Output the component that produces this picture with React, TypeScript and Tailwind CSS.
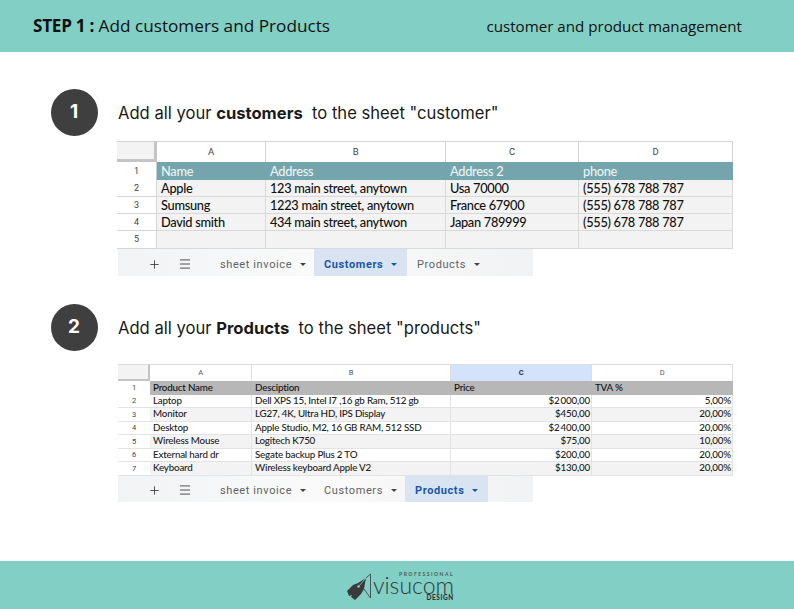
import type { ReactNode } from 'react';
import { Menu, Plus } from 'lucide-react';

const sans = 'font-["Open_Sans",sans-serif]';
const cellFont = 'font-["Lato",sans-serif] font-medium';

interface TabsProps {
    active: string;
    className?: string;
    tabs: { label: string; width: string }[];
}

const SheetTabs = ({ active, className, tabs }: TabsProps) => (
    <div className={`flex w-[415px] bg-gradient-to-r from-[#f1f3f5] via-[#fafafa] to-[#f1f2f3] pt-[3px] font-['Roboto',sans-serif] text-[11px] font-normal tracking-[0.6px] text-[#5f6368] ${className ?? ''}`}>
        <div className="flex w-[96px] items-center gap-[17px] pl-[30px] text-[#444]">
            <Plus className="h-[13px] w-[13px]" strokeWidth={1.7} />
            <Menu className="h-[14px] w-[14px]" strokeWidth={1.6} />
        </div>
        {tabs.map(t => (
            <div
                key={t.label}
                className={`-mt-[3px] flex items-center gap-[8px] pt-[3px] ${t.width} ${t.label === active ? 'bg-[#d9e4f3] font-bold text-[#1a56a8]' : ''}`}
            >
                <span>{t.label}</span>
                <span className={`h-0 w-0 border-x-[3px] border-t-[3px] border-x-transparent ${t.label === active ? 'border-t-[#1a56a8]' : 'border-t-[#444]'}`} />
            </div>
        ))}
    </div>
);

const customerRows = [
    ['Apple', '123 main street, anytown', 'Usa 70000', '(555) 678 788 787'],
    ['Sumsung', '1223 main street, anytown', 'France 67900', '(555) 678 788 787'],
    ['David smith', '434 main street, anytwon', 'Japan 789999', '(555) 678 788 787'],
    ['', '', '', ''],
];

const CustomerSheet = () => (
    <div className={`ml-[117px] w-[616px] ${cellFont} text-[12.8px] leading-none tracking-[-0.3px]`}>
        <div className="grid grid-cols-[40px_109px_180px_133px_154px] grid-rows-[21px_18px_17px_17px_17px_18px] text-[#111]">
            <div className="border-t border-r-[3px] border-b-[3px] border-t-[#d5d5d5] border-r-[#c4c4c4] border-b-[#c4c4c4] bg-[#f3f3f3]" />
            {['A', 'B', 'C', 'D'].map(c => (
                <div key={c} className="flex items-center justify-center border-t border-r border-[#d5d5d5] font-['Roboto',sans-serif] text-[9.5px] font-normal text-[#444]">{c}</div>
            ))}
            <div className="flex items-center justify-center border-r border-[#ccc] font-['Roboto',sans-serif] text-[9px] font-normal text-[#444]">1</div>
            {['Name', 'Address', 'Address 2', 'phone'].map(c => (
                <div key={c} className="flex items-center bg-[#75a5ac] pt-px pl-[4px] text-[#e9f3f4]">{c}</div>
            ))}
            {customerRows.map((row, i) => (
                <div key={i} className="contents">
                    <div className="flex items-center justify-center border-r border-b border-[#d5d5d5] font-['Roboto',sans-serif] text-[9px] font-normal text-[#444]">{i + 2}</div>
                    {row.map((cell, j) => (
                        <div key={j} className="flex items-center border-r border-b border-[#d9d9d9] bg-[#f3f3f3] pt-px pl-[4px]">{cell}</div>
                    ))}
                </div>
            ))}
        </div>
        <SheetTabs
            active="Customers"
            className="ml-px h-[27px]"
            tabs={[
                { label: 'sheet invoice', width: 'w-[100px] pl-[6px]' },
                { label: 'Customers', width: 'w-[93px] pl-[10px]' },
                { label: 'Products', width: 'w-[126px] pl-[10px]' },
            ]}
        />
    </div>
);

const productRows = [
    ['Laptop', 'Dell XPS 15, Intel I7 ,16 gb Ram, 512 gb', '$2\u2009000,00', '5,00%'],
    ['Monitor', 'LG27, 4K, Ultra HD, IPS Display', '$450,00', '20,00%'],
    ['Desktop', 'Apple Studio, M2, 16 GB RAM, 512 SSD', '$2\u2009400,00', '20,00%'],
    ['Wireless Mouse', 'Logitech K750', '$75,00', '10,00%'],
    ['External hard dr', 'Segate backup Plus 2 TO', '$200,00', '20,00%'],
    ['Keyboard', 'Wireless keyboard Apple V2', '$130,00', '20,00%'],
];

const ProductSheet = () => (
    <div className={`ml-[118px] w-[615px] ${cellFont} text-[9.8px] leading-none tracking-[-0.2px]`}>
        <div className="grid grid-cols-[32px_102px_199px_141px_141px] grid-rows-[17px_13.5px_repeat(6,13.5px)] text-[#222]">
            <div className="border-t border-r-[2px] border-b-[2px] border-t-[#ddd] border-r-[#c4c4c4] border-b-[#c4c4c4] bg-[#f3f3f3]" />
            {['A', 'B', 'C', 'D'].map(c => (
                <div
                    key={c}
                    className={`flex items-center justify-center border-t border-r border-[#ddd] font-['Roboto',sans-serif] text-[7.5px] ${c === 'C' ? 'bg-[#d3e3fb] font-bold text-[#1c3258]' : 'font-normal text-[#555]'}`}
                >
                    {c}
                </div>
            ))}
            <div className="flex items-center justify-center font-['Roboto',sans-serif] text-[7.5px] font-normal text-[#444]">1</div>
            {['Product Name', 'Desciption', 'Price', 'TVA %'].map(c => (
                <div key={c} className="flex items-center bg-[#b7b7b7] pl-[3px] text-[#111]">{c}</div>
            ))}
            {productRows.map((row, i) => (
                <div key={i} className="contents">
                    <div className="flex items-center justify-center border-b border-[#e3e3e3] font-['Roboto',sans-serif] text-[7.5px] font-normal text-[#444]">{i + 2}</div>
                    {row.map((cell, j) => (
                        <div
                            key={j}
                            className={`flex items-center border-r border-b border-[#e3e3e3] ${i % 2 ? 'bg-[#f3f3f3]' : 'bg-white'} ${j > 1 ? 'justify-end pr-[1px]' : 'pl-[3px]'}`}
                        >
                            {cell}
                        </div>
                    ))}
                </div>
            ))}
        </div>
        <SheetTabs
            active="Products"
            className="h-[26px]"
            tabs={[
                { label: 'sheet invoice', width: 'w-[100px] pl-[6px]' },
                { label: 'Customers', width: 'w-[91px] pl-[10px]' },
                { label: 'Products', width: 'w-[83px] pl-[10px]' },
            ]}
        />
    </div>
);

const StepHeading = ({ num, children }: { num: number; children: ReactNode }) => (
    <div className="ml-[51px] flex h-[47px] items-center gap-[20px]">
        <div className="flex h-[47px] w-[47px] items-center justify-center rounded-full bg-[#3f3f3f] pr-px font-['Inter',sans-serif] text-[19px] font-bold text-white">{num}</div>
        <div className="pt-[2px] font-['Inter',sans-serif] text-[16.6px] text-[#1a1a1a]">{children}</div>
    </div>
);

const Logo = () => (
    <div className="flex items-center pt-[3px] pl-[6px]">
        <svg viewBox="0 0 27 30" className="h-[30px] w-[27px] text-[#3a3a3a]">
            <path fill="currentColor" d="M1 19l6-6 5-2 8-5-2 11-3 5-6 6-4-3 1-2-3 1z" />
            <path stroke="#82cfc5" strokeWidth="0.8" fill="none" d="M20 6l-7 8" />
            <circle cx="12.5" cy="14.5" r="1.3" fill="#82cfc5" />
            <path stroke="currentColor" strokeWidth="0.8" fill="none" d="M24.5 2v24M20 6l4.5-4M18 17l6.5 9" />
        </svg>
        <div className="flex flex-col items-end font-['Lato',sans-serif] text-[#2f3a3a]">
            <span className="text-[5px] leading-[6px] font-bold tracking-[1.5px] text-[#4a5a58]">PROFESSIONAL</span>
            <span className="text-[23px] leading-[17px] font-light">visucom</span>
            <span className="text-[6.5px] leading-[8px] font-black tracking-[0.6px] text-[#333]">DESIGN</span>
        </div>
    </div>
);

export default function App() {
    return (
        <div className="flex h-[609px] w-[794px] flex-col overflow-hidden bg-white">
            <header className={`flex h-[52px] items-center justify-between bg-[#82cfc5] pr-[52px] pl-[33px] text-[#111] ${sans}`}>
                <div className="text-[17.2px]"><b className="tracking-[-0.3px]">STEP 1 :</b> Add customers and Products</div>
                <div className="text-[15.15px]">customer and product management</div>
            </header>
            <main className="flex-1 pt-[37px]">
                <StepHeading num={1}>
                    Add all your <b>customers</b>&nbsp; to the sheet "customer"
                </StepHeading>
                <div className="mt-[5px]"><CustomerSheet /></div>
                <div className="mt-[28px]">
                    <StepHeading num={2}>
                        Add all your <b>Products</b>&nbsp; to the sheet "products"
                    </StepHeading>
                </div>
                <div className="mt-[13px]"><ProductSheet /></div>
            </main>
            <footer className="flex h-[48px] items-center justify-center bg-[#82cfc5]">
                <Logo />
            </footer>
        </div>
    );
}
